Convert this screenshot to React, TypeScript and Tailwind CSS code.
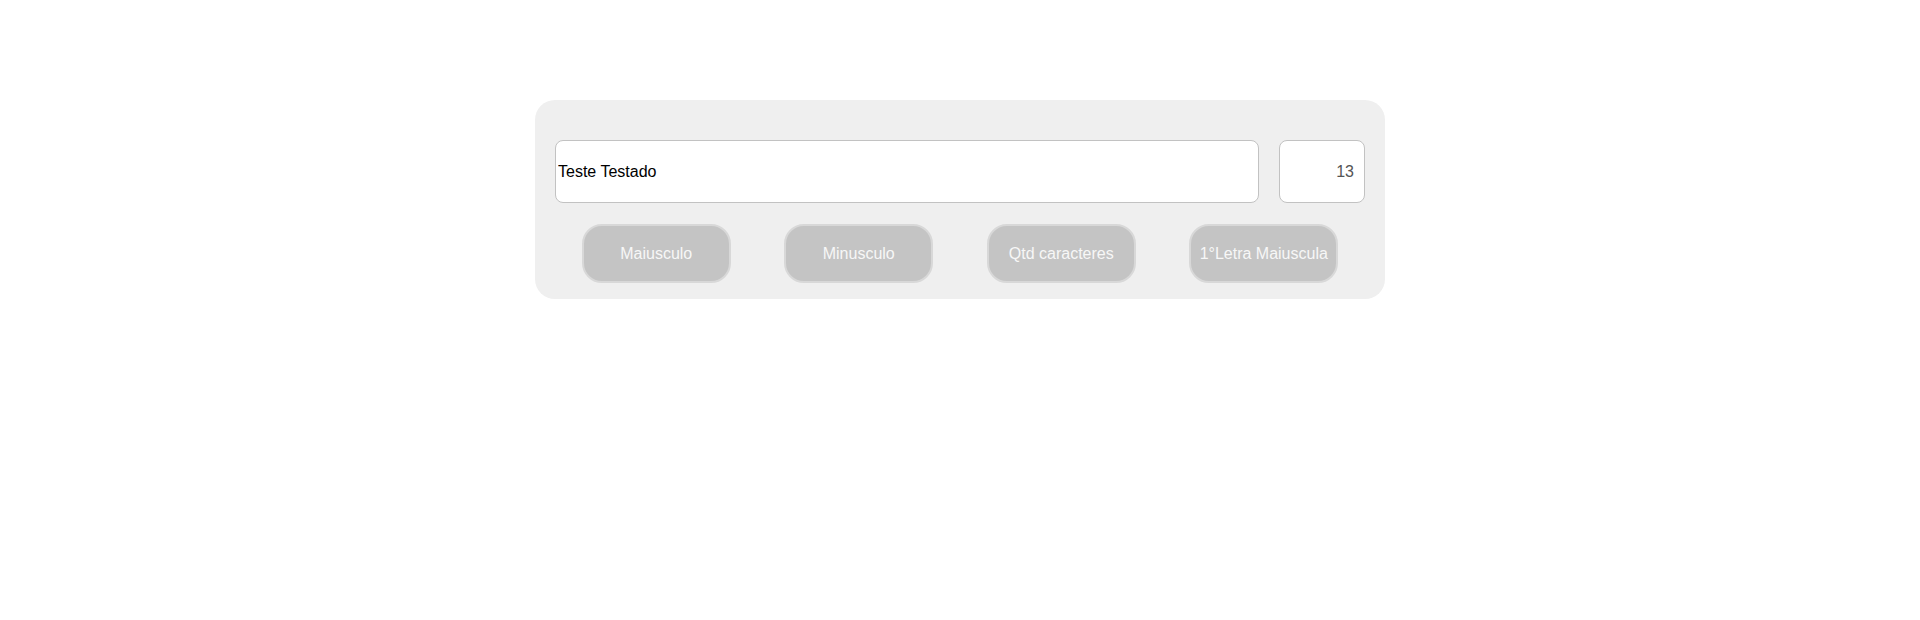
const actions = ['Maiusculo', 'Minusculo', 'Qtd caracteres', '1°Letra Maiuscula']

export default function App() {
  return (
    <div className="min-h-[620px] bg-white pt-[100px] font-['Liberation_Sans',Arial,sans-serif]">
      <div className="mx-auto w-[850px] h-[199px] rounded-[20px] bg-[#efefef] px-[20px] pt-[40px]">
        {/* text + counter */}
        <div className="flex gap-[20px]">
          <input
            readOnly
            value="Teste Testado"
            className="h-[63px] flex-1 rounded-[8px] border border-[#c2c2c2] bg-white px-[2px] text-[16px] text-black outline-none"
          />
          <input
            readOnly
            value="13"
            className="h-[63px] w-[86px] rounded-[8px] border border-[#c2c2c2] bg-white px-[10px] text-right text-[16px] text-[#545454] outline-none"
          />
        </div>

        <div className="mt-[21px] flex justify-around">
          {actions.map((label) => (
            <button
              key={label}
              className="h-[59px] w-[149px] rounded-[20px] border-2 border-[#d8d8d8] bg-[#c4c4c4] text-[16px] text-[#f7f7f7]"
            >
              {label}
            </button>
          ))}
        </div>
      </div>
    </div>
  )
}
